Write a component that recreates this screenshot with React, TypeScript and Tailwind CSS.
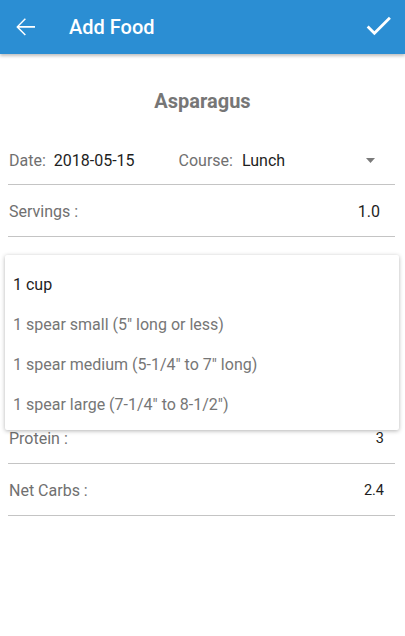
import React from 'react';

const font = { fontFamily: 'Roboto, "Noto Sans", sans-serif' };

const units = [
  '1 cup',
  '1 spear small (5" long or less)',
  '1 spear medium (5-1/4" to 7" long)',
  '1 spear large (7-1/4" to 8-1/2")',
];

function Row({ label, value, small }: { label: string; value: string; small?: boolean }) {
  return (
    <div className="h-[52px] pt-[3px] flex items-center justify-between border-b border-[#c4c4c4] ml-[8px] mr-[10px] pl-[1px]">
      <span className="text-[16px] text-[#707070]">{label}</span>
      <span className={small ? 'text-[14.5px] text-[#1e1e1e] mr-[11px]' : 'text-[16px] text-[#1e1e1e] mr-[15px]'}>
        {value}
      </span>
    </div>
  );
}

export default function App() {
  return (
    <div className="relative w-[405px] h-[636px] bg-white overflow-hidden" style={font}>
      <header className="relative h-[54px] bg-[#2b8ed3] flex items-center shadow-[0_2px_3px_rgba(0,0,0,0.25)] z-10">
        <svg className="absolute left-[10px] top-[12px]" width="30" height="30" viewBox="0 0 24 24" fill="white">
          <path d="M20 11.2H7.3l5.4-5.4-.85-.85L5 12l6.85 6.85.85-.85-5.4-5.4H20z" />
        </svg>
        <span className="ml-[69px] text-[20px] font-medium text-white">Add Food</span>
        <svg className="absolute left-[362px] top-[9px]" width="33" height="33" viewBox="0 0 24 24" fill="white">
          <path d="M9 16.17L4.83 12l-1.42 1.41L9 19 21 7l-1.41-1.41z" />
        </svg>
      </header>

      <div className="pt-[35px] h-[80px] text-center">
        <span className="text-[20px] leading-[24px] font-bold text-[#767676]">Asparagus</span>
      </div>

      <div className="h-[51px] pt-[3px] flex items-center border-b border-[#c4c4c4] ml-[8px] mr-[10px] pl-[1px] text-[16px]">
        <span className="text-[#707070]">Date:</span>
        <span className="ml-[8px] text-[#1e1e1e]">2018-05-15</span>
        <span className="ml-[44px] text-[#707070]">Course:</span>
        <span className="ml-[9px] text-[#1e1e1e]">Lunch</span>
        <svg className="ml-auto mr-[20px]" width="9" height="5" viewBox="0 0 9 5" fill="#7a7a7a">
          <path d="M0 0h9L4.5 5z" />
        </svg>
      </div>

      <Row label="Servings :" value="1.0" />

      <div className="h-[175px]" />

      <Row label="Protein :" value="3" small />
      <Row label="Net Carbs :" value="2.4" small />

      <div className="absolute top-[255px] left-[5px] w-[394px] h-[175px] bg-white rounded-[2px] shadow-[0_1px_4px_rgba(0,0,0,0.3)] pt-[10px] z-20">
        {units.map((u, i) => (
          <div
            key={u}
            className={
              'h-[40px] flex items-center pl-[8px] text-[16px] ' +
              (i === 0 ? 'text-[#1e1e1e]' : 'text-[#767676]')
            }
          >
            {u}
          </div>
        ))}
      </div>
    </div>
  );
}
